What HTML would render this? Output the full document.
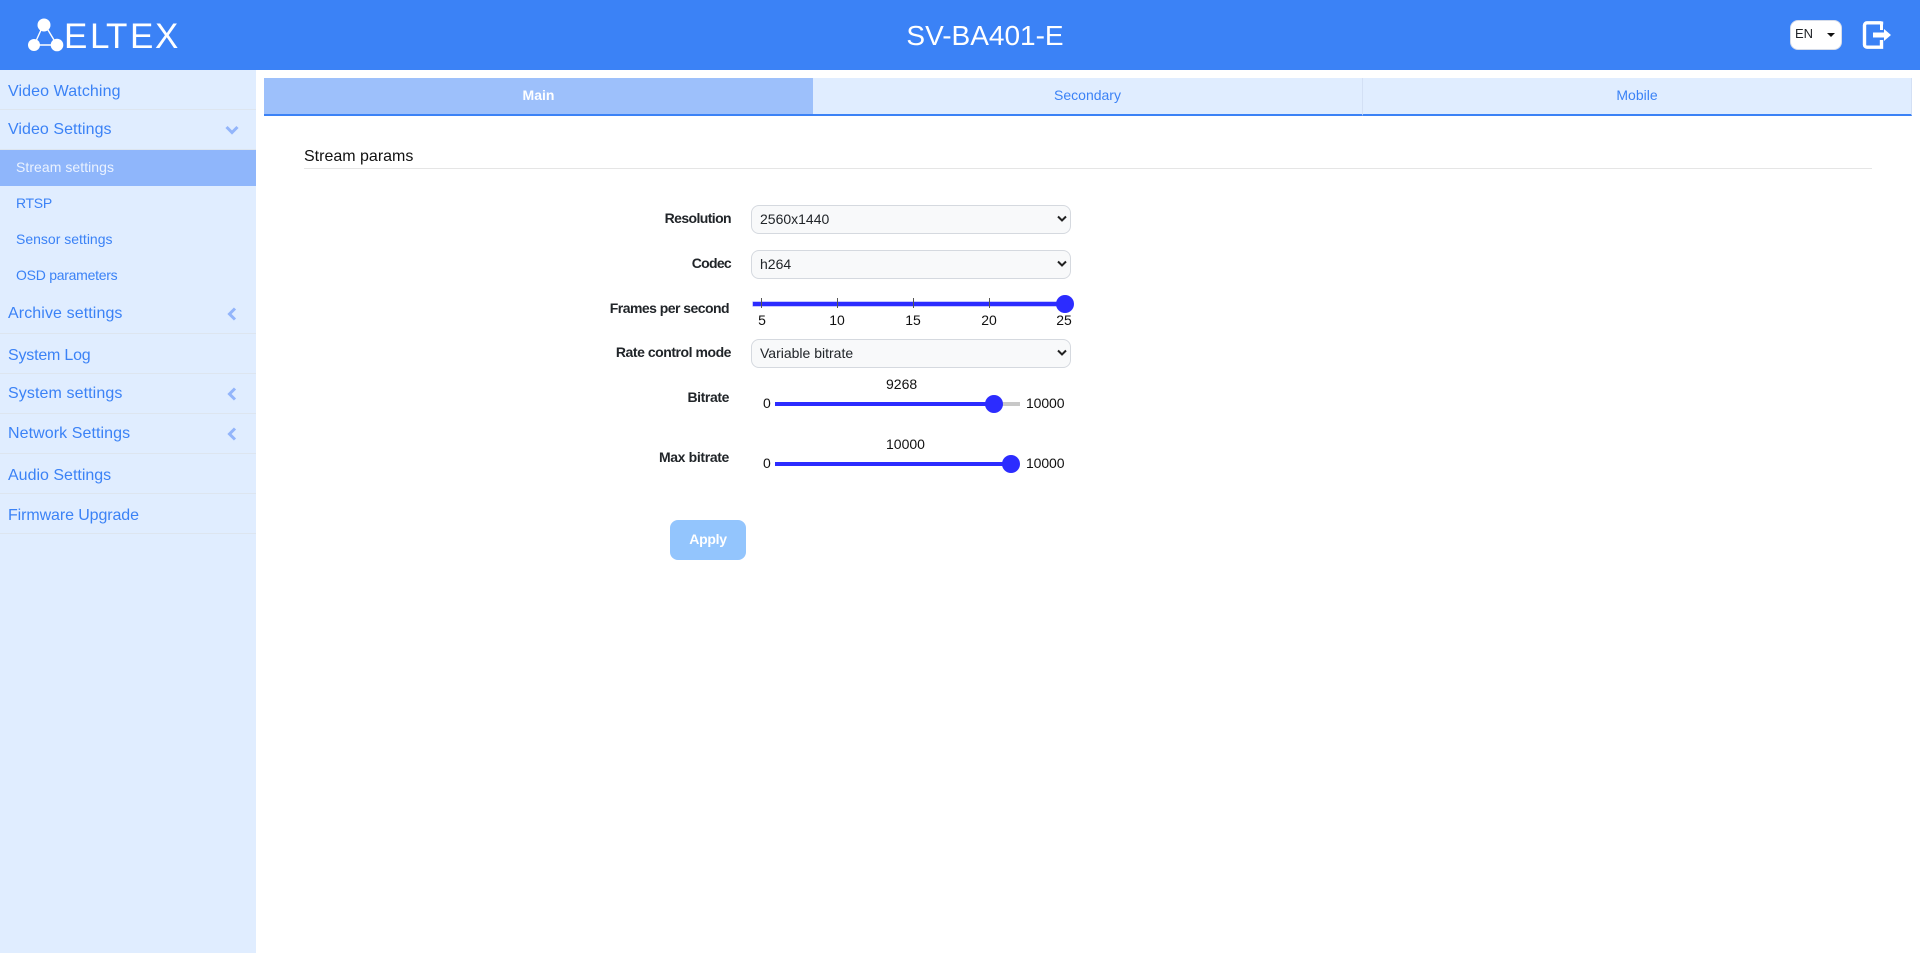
<!DOCTYPE html>
<html lang="en"><head><meta charset="utf-8"><title>SV-BA401-E</title>
<style>
*{box-sizing:border-box}
html,body{margin:0;width:1920px;height:953px;overflow:hidden;background:#fff;font-family:"Liberation Sans",sans-serif;color:#212529}
.a{position:absolute;white-space:nowrap}
#hdr{left:0;top:0;width:1920px;height:70px;background:#3b82f6}
#side{left:0;top:70px;width:256px;height:883px;background:#e0edff}
.m{left:8px;font-size:16px;line-height:20px;color:#3b82f6}
.s{left:16px;font-size:14px;line-height:18px;color:#3b82f6}
.sep{left:0;width:256px;height:1px;background:#dde5ef}
.tab{top:78px;height:38px;background:#e0edff;border-bottom:2px solid #3b82f6;border-right:1px solid #d3e0f5;text-align:center;font-size:14px;line-height:34px;color:#3b82f6}
.l{font-size:14px;line-height:18px;font-weight:bold;text-align:right;color:#212529}
select.f{position:absolute;left:751px;width:320px;height:29px;border:1px solid #d5d9df;border-radius:8px;background-color:#f8f9fa;font:14px "Liberation Sans",sans-serif;color:#212529;padding:0 4px 2px 8px;margin:0;outline:0;appearance:none;-webkit-appearance:none}
.ch{left:1057px}
.t{font-size:14px;line-height:16px;color:#111}
.tk{width:1px;height:10px;top:298px;background:#555}
.dot{width:18px;height:18px;border-radius:50%;background:#2c2cff}
</style></head><body>
<div class="a" id="hdr"></div>
<svg class="a" style="left:20px;top:10px" width="170" height="50" viewBox="0 0 170 50">
<g fill="#fff"><circle cx="24" cy="15" r="6.5"/><circle cx="14" cy="35" r="6"/><circle cx="37" cy="35" r="6.3"/></g>
<g stroke="#fff" stroke-width="1.4" fill="none"><path d="M21 20 16 31M28 20 34 30M19 35H32"/></g>
<text y="38" fill="#fff" font-family="Liberation Sans,sans-serif" font-size="35" x="44 70 86 110 135">ELTEX</text>
</svg>
<div class="a" style="left:785px;top:17px;width:400px;text-align:center;color:#fff;font-size:28px;line-height:38px">SV-BA401-E</div>
<div class="a" style="left:1790px;top:20px;width:52px;height:30px;background:#fff;border:1px solid #d5dcea;border-radius:8px"></div>
<div class="a" style="left:1795px;top:25px;font-size:13px;line-height:18px;color:#212529">EN</div>
<div class="a" style="left:1827px;top:33px;width:0;height:0;border:4px solid transparent;border-top:4px solid #111;border-bottom:0"></div>
<svg class="a" style="left:1860px;top:18px" width="34" height="34" viewBox="0 0 34 34">
<path d="M21.5 3.5V4.8H7A2.5 2.5 0 0 0 4.5 7.3V26.7A2.5 2.5 0 0 0 7 29.2H21.5V22" fill="none" stroke="#fff" stroke-width="3.4"/>
<path d="M21.5 4V12" stroke="#fff" stroke-width="3" fill="none"/>
<path d="M13 14.5H24V11L31 17 24 23V19.5H13Z" fill="#fff"/>
</svg>

<div class="a" id="side"></div>
<div class="a m" style="top:82px;letter-spacing:.1px">Video Watching</div><div class="a sep" style="top:109px"></div>
<div class="a m" style="top:120px;letter-spacing:.05px">Video Settings</div><div class="a sep" style="top:149px"></div>
<svg class="a" style="left:224px;top:124px" width="16" height="12" viewBox="0 0 16 12"><path d="M2.5 3 8 8.5 13.5 3" fill="none" stroke="#93b5fb" stroke-width="3"/></svg>
<div class="a" style="left:0;top:150px;width:256px;height:36px;background:#8fb6fb"></div>
<div class="a s" style="top:158px;color:#eaf2ff;letter-spacing:.05px">Stream settings</div>
<div class="a s" style="top:194px;letter-spacing:-.3px">RTSP</div>
<div class="a s" style="top:230px">Sensor settings</div>
<div class="a s" style="top:266px;letter-spacing:-.26px">OSD parameters</div>
<div class="a m" style="top:304px;letter-spacing:.1px">Archive settings</div><div class="a sep" style="top:333px"></div>
<svg class="a" style="left:226px;top:306px" width="12" height="16" viewBox="0 0 12 16"><path d="M9 2.5 3.5 8 9 13.5" fill="none" stroke="#93b5fb" stroke-width="3"/></svg>
<div class="a m" style="top:346px;letter-spacing:-.2px">System Log</div><div class="a sep" style="top:373px"></div>
<div class="a m" style="top:384px;letter-spacing:.1px">System settings</div><div class="a sep" style="top:413px"></div>
<svg class="a" style="left:226px;top:386px" width="12" height="16" viewBox="0 0 12 16"><path d="M9 2.5 3.5 8 9 13.5" fill="none" stroke="#93b5fb" stroke-width="3"/></svg>
<div class="a m" style="top:424px;letter-spacing:.08px">Network Settings</div><div class="a sep" style="top:453px"></div>
<svg class="a" style="left:226px;top:426px" width="12" height="16" viewBox="0 0 12 16"><path d="M9 2.5 3.5 8 9 13.5" fill="none" stroke="#93b5fb" stroke-width="3"/></svg>
<div class="a m" style="top:466px">Audio Settings</div><div class="a sep" style="top:493px"></div>
<div class="a m" style="top:506px;letter-spacing:-.1px">Firmware Upgrade</div><div class="a sep" style="top:533px"></div>

<div class="a tab" style="left:264px;width:549px;background:#9dc0fb;color:#fff;font-weight:bold;border-right:0">Main</div>
<div class="a tab" style="left:813px;width:550px">Secondary</div>
<div class="a tab" style="left:1363px;width:549px">Mobile</div>

<div class="a" style="left:304px;top:147px;font-size:16px;line-height:20px;color:#111">Stream params</div>
<div class="a" style="left:304px;top:168px;width:1568px;height:1px;background:#e5e5e5"></div>

<div class="a l" style="left:500px;width:231px;top:209px;letter-spacing:-.6px">Resolution</div>
<select class="f" style="top:205px"><option>2560x1440</option></select>
<svg class="a ch" style="top:215px" width="10" height="8" viewBox="0 0 10 8"><path d="M1 1.5 5 5.5 9 1.5" fill="none" stroke="#222" stroke-width="2"/></svg>
<div class="a l" style="left:500px;width:231px;top:254px;letter-spacing:-.7px">Codec</div>
<select class="f" style="top:250px"><option>h264</option></select>
<svg class="a ch" style="top:260px" width="10" height="8" viewBox="0 0 10 8"><path d="M1 1.5 5 5.5 9 1.5" fill="none" stroke="#222" stroke-width="2"/></svg>
<div class="a l" style="left:500px;width:229px;top:299px;letter-spacing:-.54px">Frames per second</div>
<div class="a" style="left:753px;top:302px;width:320px;height:4px;background:#2c2cff;box-shadow:0 0 0 .5px #8f8fff"></div>
<div class="a tk" style="left:761px"></div><div class="a tk" style="left:837px"></div><div class="a tk" style="left:913px"></div><div class="a tk" style="left:989px"></div>
<div class="a dot" style="left:1056px;top:295px"></div>
<div class="a t" style="left:732px;width:60px;text-align:center;top:312px">5</div>
<div class="a t" style="left:807px;width:60px;text-align:center;top:312px">10</div>
<div class="a t" style="left:883px;width:60px;text-align:center;top:312px">15</div>
<div class="a t" style="left:959px;width:60px;text-align:center;top:312px">20</div>
<div class="a t" style="left:1034px;width:60px;text-align:center;top:312px">25</div>
<div class="a l" style="left:500px;width:231px;top:343px;letter-spacing:-.46px">Rate control mode</div>
<select class="f" style="top:339px"><option>Variable bitrate</option></select>
<svg class="a ch" style="top:349px" width="10" height="8" viewBox="0 0 10 8"><path d="M1 1.5 5 5.5 9 1.5" fill="none" stroke="#222" stroke-width="2"/></svg>

<div class="a l" style="left:500px;width:229px;top:388px;letter-spacing:-.4px">Bitrate</div>
<div class="a t" style="left:886px;top:376px">9268</div>
<div class="a t" style="left:763px;top:395px">0</div>
<div class="a" style="left:775px;top:402px;width:245px;height:4px;background:#c8c8c8"></div>
<div class="a" style="left:775px;top:402px;width:219px;height:4px;background:#2c2cff"></div>
<div class="a dot" style="left:985px;top:395px"></div>
<div class="a t" style="left:1026px;top:395px;letter-spacing:-.1px">10000</div>

<div class="a l" style="left:500px;width:229px;top:448px;letter-spacing:-.35px">Max bitrate</div>
<div class="a t" style="left:886px;top:436px">10000</div>
<div class="a t" style="left:763px;top:455px">0</div>
<div class="a" style="left:775px;top:462px;width:240px;height:4px;background:#2c2cff"></div>
<div class="a dot" style="left:1002px;top:455px"></div>
<div class="a t" style="left:1026px;top:455px;letter-spacing:-.1px">10000</div>

<div class="a" style="left:670px;top:520px;width:76px;height:40px;border-radius:8px;background:#93c5fd;color:#fff;font-size:14px;font-weight:bold;text-align:center;line-height:38px;letter-spacing:-.3px">Apply</div>
</body></html>
